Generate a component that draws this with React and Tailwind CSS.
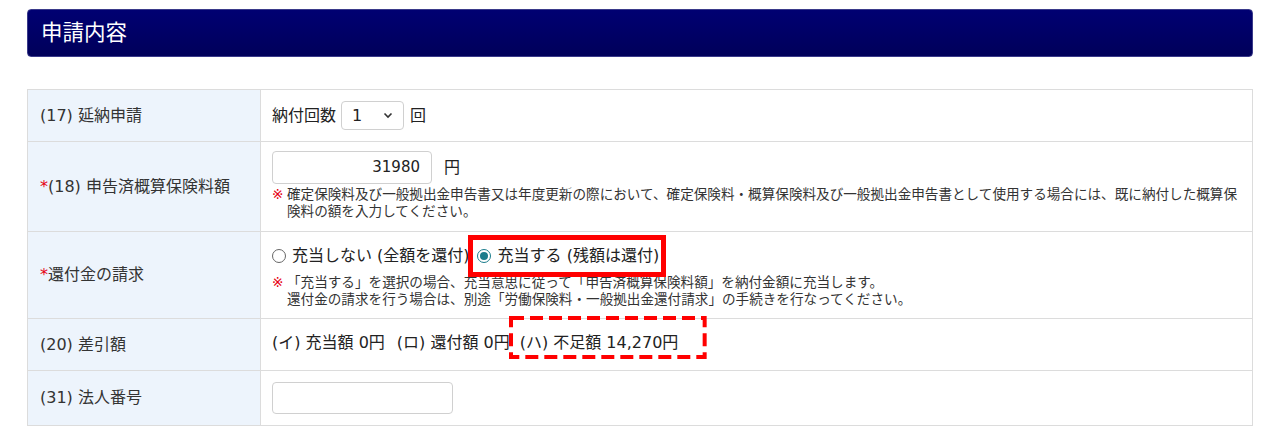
const font = { fontFamily: '"DejaVu Sans", "Noto Sans CJK JP", sans-serif' };

const Row = ({ label, required, children, className = "" }) => (
  <div className="grid grid-cols-[233px_1fr] border-b border-[#dcdcdc] last:border-b-0">
    <div className="flex items-center bg-[#edf4fc] border-r border-[#dcdcdc] px-[12px] text-[16px] text-[#333]">
      {required && <span className="text-[#e60012]">*</span>}
      {label}
    </div>
    <div className={`px-[11px] text-[16px] text-[#222] ${className}`}>{children}</div>
  </div>
);

const Radio = ({ checked }) =>
  checked ? (
    <span className="inline-flex h-[14px] w-[14px] shrink-0 items-center justify-center rounded-full border border-[#1a7c8c] bg-white">
      <span className="h-[8px] w-[8px] rounded-full bg-[#1a7c8c]" />
    </span>
  ) : (
    <span className="inline-block h-[14px] w-[14px] shrink-0 rounded-full border border-[#666] bg-white" />
  );

const Note = ({ children, className = "" }) => (
  <div className={`flex text-[13.6px] leading-[17px] text-[#333] ${className}`}>
    <span className="text-[#e60012] shrink-0 w-[15px]">※</span>
    <span>{children}</span>
  </div>
);

export default function App() {
  return (
    <div className="bg-white px-[27px] pt-[9px] pb-[8px] min-h-[434px]" style={font}>
      <div className="h-[48px] rounded-[4px] border border-[#3a3a8a] bg-gradient-to-b from-[#000072] to-[#00005a] flex items-center px-[13px]">
        <h2 className="text-[21.5px] text-white leading-none">申請内容</h2>
      </div>

      <div className="mt-[32px] border border-[#dcdcdc]">
        <Row label="(17) 延納申請" className="h-[51px] flex items-center">
          <span>納付回数</span>
          <div className="ml-[5px] flex h-[29px] w-[63px] items-center justify-between rounded-[4px] border border-[#d0d0d0] px-[10px]">
            <span>1</span>
            <svg width="10" height="7" viewBox="0 0 10 7" fill="none">
              <path d="M1.5 1.5 L5 5 L8.5 1.5" stroke="#333" strokeWidth="1.6" />
            </svg>
          </div>
          <span className="ml-[6px]">回</span>
        </Row>

        <Row label="(18) 申告済概算保険料額" required className="h-[89px] pt-[9px]">
          <div className="flex items-center">
            <div className="flex h-[33px] w-[160px] items-center justify-end rounded-[4px] border border-[#d0d0d0] px-[11px] text-[15px]">
              31980
            </div>
            <span className="ml-[12px]">円</span>
          </div>
          <Note className="mt-[2px]">
            確定保険料及び一般拠出金申告書又は年度更新の際において、確定保険料・概算保険料及び一般拠出金申告書として使用する場合には、既に納付した概算保険料の額を入力してください。
          </Note>
        </Row>

        <Row label="還付金の請求" required className="h-[86px] pt-[12px]">
          <div className="flex items-center">
            <Radio />
            <span className="ml-[6px]">充当しない (全額を還付)</span>
            <span className="relative ml-[7px] flex items-center">
              <Radio checked />
              <span className="ml-[7px]">充当する (残額は還付)</span>
              <span className="absolute left-[-9px] right-[-7px] top-[-9px] bottom-[-9px] border-[5px] border-[#ff0000]" />
            </span>
          </div>
          <Note className="mt-[6px]">
            「充当する」を選択の場合、充当意思に従って「申告済概算保険料額」を納付金額に充当します。
            <br />
            還付金の請求を行う場合は、別途「労働保険料・一般拠出金還付請求」の手続きを行なってください。
          </Note>
        </Row>

        <Row label="(20) 差引額" className="h-[51px] flex items-center pb-[4px]">
          <span>(イ) 充当額 0円</span>
          <span className="ml-[12px]">(ロ) 還付額 0円</span>
          <span className="relative ml-[10px]">
            (ハ) 不足額 14,270円
            <svg className="absolute left-[-11px] top-[-15px] h-[43px] w-[calc(100%+39px)] overflow-visible">
              <rect x="2" y="2" width="calc(100% - 4px)" height="39" fill="none" stroke="#ff0000" strokeWidth="4" strokeDasharray="13 6" />
            </svg>
          </span>
        </Row>

        <Row label="(31) 法人番号" className="h-[54px] flex items-center">
          <div className="h-[32px] w-[181px] rounded-[4px] border border-[#d0d0d0]" />
        </Row>
      </div>
    </div>
  );
}
